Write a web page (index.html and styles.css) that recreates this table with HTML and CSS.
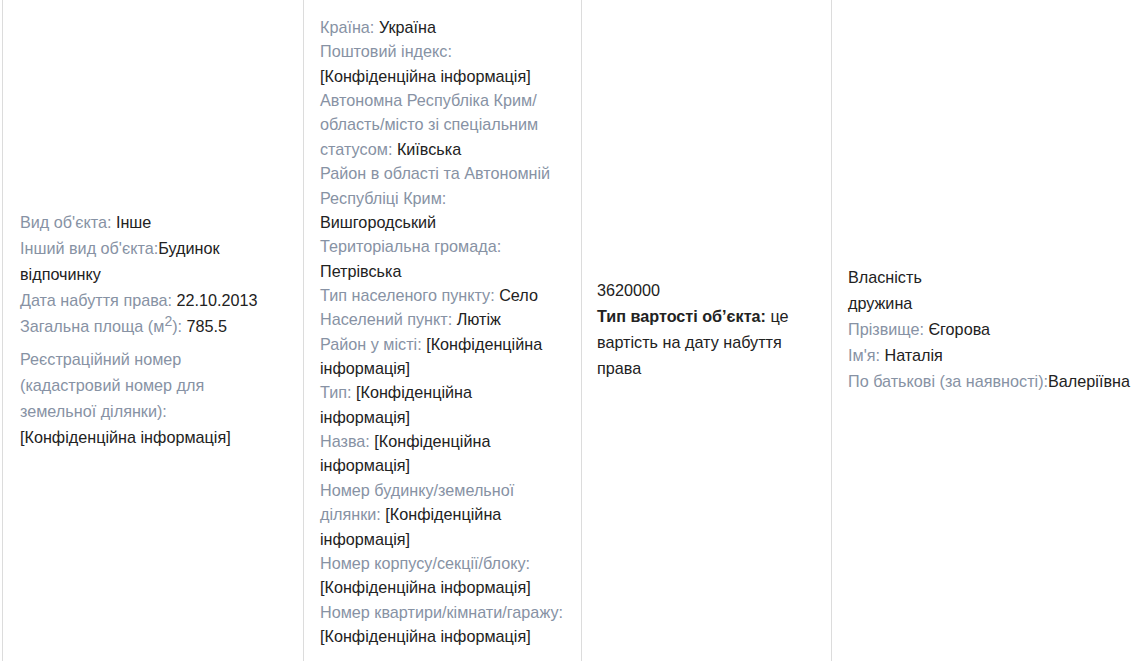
FILE: index.html
```html
<!DOCTYPE html>
<html lang="uk">
<head>
<meta charset="utf-8">
<link rel="stylesheet" href="styles.css">
</head>
<body>
<table class="decl">
  <tr>
    <td class="c1">
      <div class="block">
        <span class="lbl">Вид об'єкта: </span><span class="val">Інше</span><br>
        <span class="lbl">Інший вид об'єкта:</span><span class="val">Будинок відпочинку</span><br>
        <span class="lbl">Дата набуття права: </span><span class="val">22.10.2013</span><br>
        <span class="lbl">Загальна площа (м<sup>2</sup>): </span><span class="val">785.5</span>
      </div>
      <div class="block reg">
        <span class="lbl">Реєстраційний номер (кадастровий номер для земельної ділянки): </span><span class="val">[Конфіденційна інформація]</span>
      </div>
    </td>
    <td class="c2">
      <span class="lbl">Країна: </span><span class="val">Україна</span><br>
      <span class="lbl">Поштовий індекс: </span><span class="val">[Конфіденційна інформація]</span><br>
      <span class="lbl">Автономна Республіка Крим/область/місто зі спеціальним статусом: </span><span class="val">Київська</span><br>
      <span class="lbl">Район в області та Автономній Республіці Крим: </span><span class="val">Вишгородський</span><br>
      <span class="lbl">Територіальна громада: </span><span class="val">Петрівська</span><br>
      <span class="lbl">Тип населеного пункту: </span><span class="val">Село</span><br>
      <span class="lbl">Населений пункт: </span><span class="val">Лютіж</span><br>
      <span class="lbl">Район у місті: </span><span class="val">[Конфіденційна інформація]</span><br>
      <span class="lbl">Тип: </span><span class="val">[Конфіденційна інформація]</span><br>
      <span class="lbl">Назва: </span><span class="val">[Конфіденційна інформація]</span><br>
      <span class="lbl">Номер будинку/земельної ділянки: </span><span class="val">[Конфіденційна інформація]</span><br>
      <span class="lbl">Номер корпусу/секції/блоку: </span><span class="val">[Конфіденційна інформація]</span><br>
      <span class="lbl">Номер квартири/кімнати/гаражу: </span><span class="val">[Конфіденційна інформація]</span>
    </td>
    <td class="c3">
      <span class="val">3620000</span><br>
      <b class="val">Тип вартості об’єкта:</b> <span class="val">це вартість на дату набуття права</span>
    </td>
    <td class="c4">
      <span class="val">Власність</span><br>
      <span class="val">дружина</span><br>
      <span class="lbl">Прізвище: </span><span class="val">Єгорова</span><br>
      <span class="lbl">Ім'я: </span><span class="val">Наталія</span><br>
      <span class="lbl">По батькові (за наявності):</span><span class="val">Валеріївна</span>
    </td>
  </tr>
</table>
</body>
</html>
```
FILE: styles.css
```css
html, body {
  margin: 0;
  padding: 0;
  background: #fff;
  overflow: hidden;
}
body {
  font-family: "Liberation Sans", Arial, sans-serif;
  font-size: 16.2px;
  color: #222;
}
.decl {
  border-collapse: collapse;
  margin-left: 2px;
  table-layout: fixed;
  width: 1160px;
  height: 663px;
}
.decl td {
  vertical-align: middle;
  border-left: 1px solid #dcdcdc;
  border-right: 1px solid #dcdcdc;
  padding: 0 17px;
  line-height: 26px;
}
.c1 { width: 249px; padding-right: 34px !important; padding-bottom: 4px !important; }
.c2 { width: 245px; padding-left: 16px !important; padding-right: 16px !important; line-height: 24.36px !important; padding-top: 15px !important; padding-bottom: 15px !important; }
.c3 { width: 217px; padding-left: 15px !important; padding-bottom: 6px !important; }
.c4 { width: auto; white-space: nowrap; padding-left: 16px !important; padding-bottom: 6px !important; }
.lbl { color: #8792a4; }
.val { color: #222; }
b.val { font-weight: bold; }
sup { font-size: 14px; line-height: 0; vertical-align: 0.45em; }
.reg { margin-top: 7px; }
```
